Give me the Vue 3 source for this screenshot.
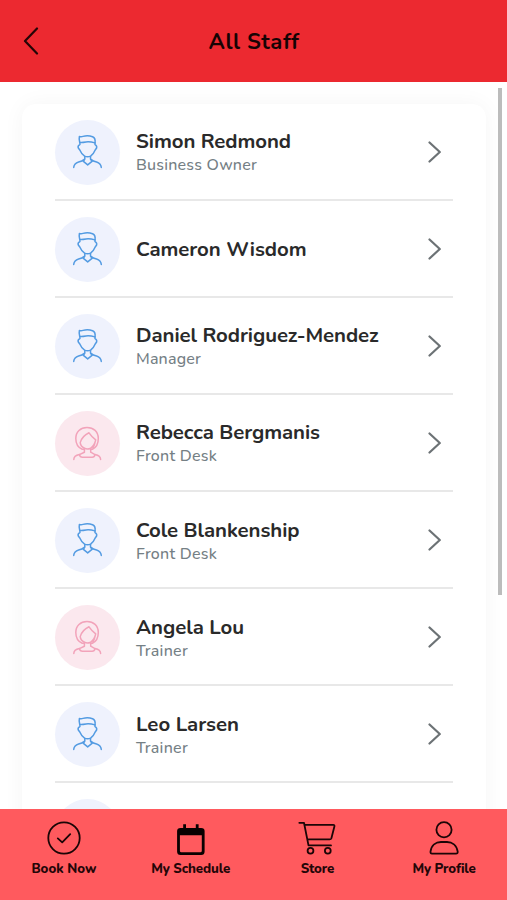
<script setup>
const staff = [
  { name: 'Simon Redmond', role: 'Business Owner', look: 'm', width: 155, roleWidth: 121 },
  { name: 'Cameron Wisdom', role: '', look: 'm', width: 170.5, roleWidth: 0 },
  { name: 'Daniel Rodriguez-Mendez', role: 'Manager', look: 'm', width: 242.5, roleWidth: 65 },
  { name: 'Rebecca Bergmanis', role: 'Front Desk', look: 'f', width: 184, roleWidth: 81 },
  { name: 'Cole Blankenship', role: 'Front Desk', look: 'm', width: 163.5, roleWidth: 81 },
  { name: 'Angela Lou', role: 'Trainer', look: 'f', width: 108, roleWidth: 52 },
  { name: 'Leo Larsen', role: 'Trainer', look: 'm', width: 103, roleWidth: 52 },
  { name: '', role: '', look: 'm', width: 0, roleWidth: 0 },
]
const tabs = [
  { id: 'book', label: 'Book Now', width: 65 },
  { id: 'schedule', label: 'My Schedule', width: 79 },
  { id: 'store', label: 'Store', width: 33.5 },
  { id: 'profile', label: 'My Profile', width: 63 },
]
// Tracks each label so that it fills its intended width.
const vFit = {
  mounted(el, { value }) {
    const n = el.textContent.length
    if (!value || !n) return
    const gap = (value - el.getBoundingClientRect().width) / n
    el.style.letterSpacing = gap.toFixed(3) + 'px'
  },
}
</script>

<template>
  <div class="screen">
    <header class="top">
      <svg class="back" viewBox="0 0 16 28"><path d="M14 1.5 2 14 14 26.5" /></svg>
      <h1><span v-fit="91">All Staff</span></h1>
    </header>
    <main class="body">
      <section class="card">
        <div v-for="(p, i) in staff" :key="i" class="row">
          <div class="avatar" :class="p.look">
            <svg v-if="p.look === 'm'" viewBox="0 0 65 65">
              <path d="M24.7 22.3Q23.8 19 24.4 16.5Q26.2 17 28 16.4Q33 15 37.6 16.8Q40.8 18.3 40 22.9Q35 21.4 31 21.9Q27 22.6 24.7 22.3Z" />
              <path d="M24.9 22.5V24.6Q22.4 25.6 23.3 28L24.8 30Q26.4 34 29.6 36.1Q32.6 37.6 35.6 36.1Q38.6 34 40.2 30L41.6 28Q42.2 25.6 40 24.6V22.8" />
              <path d="M29.8 36.6V39L28.4 41.4 32.7 44.9 37 41.4 35.5 39V36.6M18.7 47.4Q19.2 43.2 23.6 42Q27.2 41.2 29.3 39.4M46.3 47.4Q45.8 43.2 41.6 42Q38 41.2 36 39.4" />
            </svg>
            <svg v-else viewBox="0 0 65 65">
              <path d="M28.6 38.3H27.2Q20.8 35.5 20.8 27.5C20.8 20.5 25.5 16.6 32 16.6S43.3 20.5 43.3 27.5Q43.3 35.5 37.4 38.3H36" />
              <path d="M34 21.8Q27.2 25 25.2 31.6Q25.6 35.4 29.4 37.2Q32.3 38.8 35.7 37.2Q39.6 34.4 40.7 28.9Q36.6 25.6 34 21.8ZM40.7 28.9Q39.6 34 38 37" />
              <path d="M29.4 37.6V41.2L24.4 43.6Q25 46.3 27.4 46.3H37.2Q39.5 46.3 40 43.6L35.7 41.2V37.6M18.8 48.5Q18.8 44.5 24.4 43.4M45.6 48.5Q45.6 44.5 40 43.4" />
            </svg>
          </div>
          <div class="text">
            <div v-if="p.name" class="name"><span v-fit="p.width">{{ p.name }}</span></div>
            <div v-if="p.role" class="role"><span v-fit="p.roleWidth">{{ p.role }}</span></div>
          </div>
          <svg class="chev" viewBox="0 0 14 22"><path d="M1.5 1.5 11.8 11 1.5 20.5" /></svg>
        </div>
      </section>
      <div class="thumb"></div>
    </main>
    <nav class="tabs">
      <div v-for="t in tabs" :key="t.id" class="tab">
        <svg class="icon" viewBox="0 0 40 36">
          <template v-if="t.id === 'book'">
            <circle cx="20" cy="18" r="15.7" />
            <path d="M13.8 18.4 18.2 22.4 26.2 14.2" />
          </template>
          <template v-else-if="t.id === 'schedule'">
            <path class="solid" fill-rule="evenodd" d="M12.2 4.2V8H9.6Q6.1 8 6.1 11V31.5Q6.1 35 9.6 35H30.1Q33.6 35 33.6 31.5V11Q33.6 8 30.1 8H27.6V4.2H24.8V8H15V4.2ZM8.9 15.3H30.8V30.8Q30.8 32.3 29.3 32.3H10.4Q8.9 32.3 8.9 30.8Z" />
          </template>
          <template v-else-if="t.id === 'store'">
            <path d="M2.3 2.8H7L11.5 25.4H34M7.3 4.8H36.2Q37.8 4.8 37.4 6.5L34.4 18.2Q34 19.4 32.6 19.4H10.4" />
            <circle cx="13.5" cy="30.8" r="2.9" />
            <circle cx="30.8" cy="30.8" r="2.9" />
          </template>
          <template v-else>
            <circle cx="20" cy="9.8" r="7.6" />
            <path d="M8 33.6Q6.3 33.6 6.5 31.7C7.2 25 12 22 17 22H23C28 22 32.8 25 33.7 31.7Q33.8 33.6 32 33.6Z" />
          </template>
        </svg>
        <div class="label"><span v-fit="t.width">{{ t.label }}</span></div>
      </div>
    </nav>
  </div>
</template>

<style>
body { margin: 0; overflow: hidden; }
</style>

<style scoped>
.screen { width: 507px; height: 900px; display: flex; flex-direction: column; overflow: hidden; background: #fff; font-family: "Nunito", "Open Sans", "Noto Sans", sans-serif; }
span { display: inline-block; white-space: nowrap; }
svg { fill: none; stroke-linecap: round; stroke-linejoin: round; flex: none; }
.top { box-sizing: border-box; height: 81.5px; flex: none; display: grid; grid-template-columns: 39px 1fr 39px; align-items: center; background: #ec2930; padding-top: 1px; }
.back { width: 16px; height: 28px; margin-left: 23px; stroke: #240506; stroke-width: 2.2; }
h1 { margin: 0; padding: 1px 0 0 1px; text-align: center; font-size: 22px; line-height: 30px; font-weight: 700; color: #160304; }
.body { position: relative; flex: 1; min-height: 0; overflow: hidden; padding: 22.1px 21px 0 22px; }
.card { border-radius: 14px; background: #fff; box-shadow: 0 0 22px rgba(0, 0, 0, .045); padding: 0 33px; }
.row { box-sizing: border-box; height: 97.1px; display: flex; align-items: center; border-bottom: 2px solid #e8e8e8; }
.avatar { width: 65px; height: 65px; border-radius: 50%; flex: none; margin-top: 2px; }
.avatar svg { display: block; width: 65px; height: 65px; stroke-width: 1.5; }
.m { background: #eff2fd; stroke: #539be2; }
.f { background: #fbe8ee; stroke: #f2a3ba; }
.text { flex: 1; padding: 2px 0 0 16px; }
.name { font-size: 20.4px; line-height: 26px; font-weight: 700; color: #2a2a2a; }
.role { font-size: 16px; line-height: 22px; font-weight: 500; color: #758085; }
.chev { width: 14px; height: 22px; margin: 1px 11px 0 0; stroke: #6c7275; stroke-width: 2.2; }
.thumb { position: absolute; right: 5px; top: 6px; width: 4px; height: 507px; background: #bcbcbc; }
.tabs { flex: none; box-sizing: border-box; height: 91px; padding-top: 11px; display: grid; grid-template-columns: repeat(4, 1fr); background: #ff5a5e; }
.tab { display: flex; flex-direction: column; align-items: center; padding-left: 1px; }
.icon { width: 40px; height: 36px; stroke: #1b0506; stroke-width: 1.8; }
.solid { fill: #080101; stroke: none; }
.label { margin-top: 3px; font-size: 13.3px; line-height: 20px; font-weight: 800; color: #240608; }
</style>
